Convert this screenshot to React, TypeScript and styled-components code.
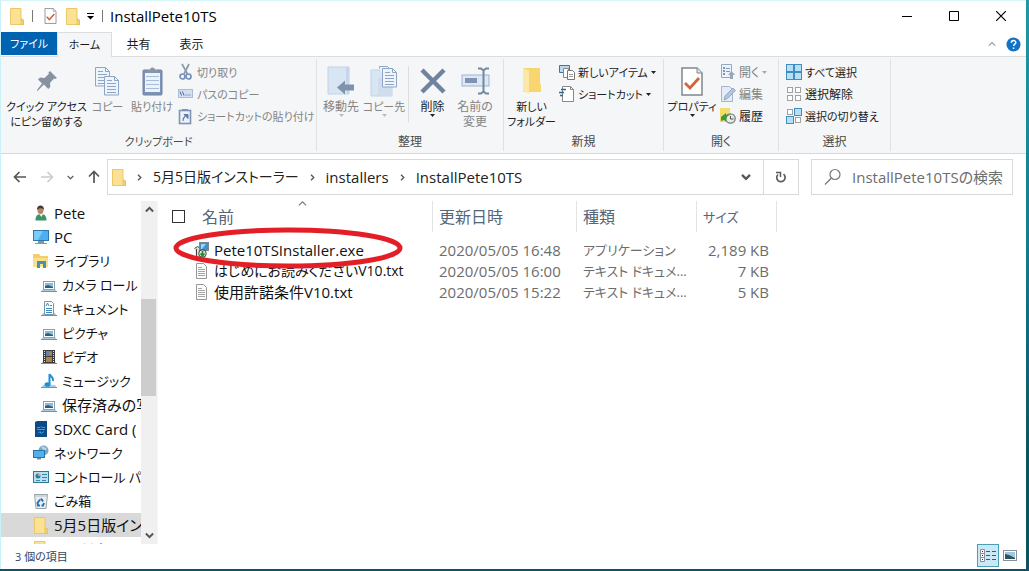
import React from "react";
import styled, { createGlobalStyle } from "styled-components";

const GlobalStyle = createGlobalStyle`
  *, *::before, *::after { box-sizing: border-box; }
  body {
    margin: 0;
    background: #0d5265;
    font-family: "Open Sans", "Noto Sans CJK JP", sans-serif;
    font-feature-settings: "palt";
    color: #1a1a1a;
  }
  button { font: inherit; font-feature-settings: inherit; color: inherit; background: none; border: 0; padding: 0; }
  svg { display: block; flex: none; }
`;

const Desktop = styled.div`
  height: 100vh;
  min-height: 480px;
  padding: 0 3px 2px 0;
  background: linear-gradient(#1d9aa3, #128092 40%, #0d5265 80%);
`;

const Window = styled.div`
  height: 100%;
  display: flex;
  flex-direction: column;
  background: #fff;
  border-top: 1px solid #d3f6f9;
  border-left: 1px solid #c9f1f8;
`;

const TitleBar = styled.header`
  display: flex;
  align-items: center;
  height: 31px;
  flex: none;
  padding: 0 2px 1px 9px;
`;

const QuickAccess = styled.div`
  display: flex;
  align-items: center;
`;

const QuickButton = styled.button<{ $gap: number }>`
  margin-right: ${(p) => p.$gap}px;
`;

const ThinRule = styled.span<{ $gap: number }>`
  width: 1px;
  height: 12px;
  margin-right: ${(p) => p.$gap}px;
  background: #777;
`;

const Title = styled.h1`
  flex: 1;
  margin: 0;
  font-size: 15px;
  font-weight: 400;
  line-height: 20px;
  color: #000;
`;

const CaptionButton = styled.button`
  width: 47px;
  height: 30px;
  display: grid;
  place-items: center;
`;

const TabBar = styled.nav`
  display: flex;
  height: 24px;
  flex: none;
  font-size: 12px;
  line-height: 22px;
`;

const FileTab = styled.button`
  width: 56px;
  height: 23px;
  font-size: 11px;
  color: #fff;
  background: #0063b1;
`;

const Tab = styled.button<{ $active?: boolean }>`
  width: ${(p) => (p.$active ? 55 : 53)}px;
  height: 25px;
  z-index: 1;
  font-size: ${(p) => (p.$active ? 11 : 12)}px;
  border: 1px solid ${(p) => (p.$active ? "#dcdddf" : "transparent")};
  border-bottom: 0;
  background: ${(p) => (p.$active ? "#f5f6f7" : "none")};
`;

const TabTools = styled.div`
  display: flex;
  align-items: center;
  gap: 10px;
  margin-left: auto;
  padding-right: 5px;
`;

const Ribbon = styled.section`
  display: flex;
  flex: none;
  height: 98px;
  background: #f5f6f7;
  border-top: 1px solid #dcdddf;
  border-bottom: 1px solid #d8d9db;
  font-size: 12px;
`;

const Group = styled.div<{ $width: number }>`
  display: flex;
  flex-direction: column;
  flex: none;
  width: ${(p) => p.$width}px;
  margin: 2px 0;
  padding-top: 2px;
  border-right: 1px solid #e0e1e3;
`;

const GroupBody = styled.div<{ $inset?: number }>`
  display: flex;
  flex: 1;
  padding-left: ${(p) => p.$inset ?? 0}px;
`;

const GroupLabel = styled.div<{ $kana?: boolean }>`
  height: 17px;
  font-size: ${(p) => (p.$kana ? 11 : 12)}px;
  line-height: 16px;
  text-align: center;
  color: #4a4a4a;
`;

const LargeButton = styled.button<{ $width: number; $muted?: boolean; $kana?: boolean }>`
  display: flex;
  flex-direction: column;
  flex: none;
  align-items: center;
  width: ${(p) => p.$width}px;
  padding-top: 2px;
  font-size: ${(p) => (p.$kana ? 11 : 12)}px;
  line-height: 15px;
  white-space: nowrap;
  color: ${(p) => (p.$muted ? "#848484" : "#222")};
`;

const LargeIcon = styled.span`
  display: grid;
  place-items: center;
  height: 36px;
`;

const ItemList = styled.div<{ $inset?: number }>`
  display: flex;
  flex-direction: column;
  padding-left: ${(p) => p.$inset ?? 0}px;
`;

const SmallButton = styled.button<{ $muted?: boolean; $kana?: boolean }>`
  display: flex;
  align-items: center;
  gap: 3px;
  height: 22px;
  font-size: ${(p) => (p.$kana ? 11 : 12)}px;
  white-space: nowrap;
  color: ${(p) => (p.$muted ? "#848484" : "#222")};
`;

const InnerRule = styled.span`
  width: 1px;
  height: 56px;
  margin: 5px 2px 0;
  background: #dddee0;
`;

const AddressRow = styled.div`
  display: flex;
  flex: none;
  height: 47px;
  padding: 5px 13px 6px 12px;
  gap: 12px;
`;

const NavButtons = styled.div`
  display: flex;
  align-items: center;
  width: 82px;
  gap: 13px;
`;

const AddressBox = styled.div`
  display: flex;
  align-items: center;
  flex: 1;
  border: 1px solid #d9d9d9;
  font-size: 15px;
`;

const Crumbs = styled.div`
  display: flex;
  align-items: center;
  flex: 1;
  gap: 10px;
  padding-left: 4px;
  line-height: 20px;
  white-space: nowrap;
  color: #222;
`;

const CrumbKana = styled.span`
  font-size: 14px;
`;

const BoxButton = styled.button<{ $ruled?: boolean }>`
  display: grid;
  place-items: center;
  align-self: stretch;
  width: 35px;
  border-left: 1px solid ${(p) => (p.$ruled ? "#d9d9d9" : "transparent")};
`;

const SearchBox = styled.label`
  display: flex;
  align-items: center;
  gap: 10px;
  width: 202px;
  padding-left: 12px;
  border: 1px solid #d9d9d9;
`;

const SearchInput = styled.input`
  flex: 1;
  min-width: 0;
  padding: 0;
  border: 0;
  outline: 0;
  background: none;
  font: inherit;
  font-size: 15px;
  font-feature-settings: inherit;
  &::placeholder { color: #6d6d6d; opacity: 1; }
`;

const Content = styled.div`
  display: flex;
  flex: 1;
  min-height: 0;
`;

const Sidebar = styled.aside`
  display: flex;
  flex: none;
  width: 157px;
  border-right: 1px solid #f6f6f6;
`;

const Tree = styled.ul`
  flex: 1;
  min-width: 0;
  margin: 0;
  padding: 0;
  overflow: hidden;
  list-style: none;
`;

const TreeItem = styled.li<{ $level: number; $selected?: boolean; $kana?: boolean }>`
  display: flex;
  align-items: center;
  gap: 5px;
  height: 24px;
  padding-left: ${(p) => (p.$level === 1 ? 32 : 40)}px;
  font-size: ${(p) => (p.$kana ? 13 : 15)}px;
  line-height: 24px;
  white-space: nowrap;
  color: #111;
  background: ${(p) => (p.$selected ? "#d9d9d9" : "none")};
`;

const IconSlot = styled.span`
  display: grid;
  place-items: center;
  flex: none;
  width: 16px;
`;

const ScrollTrack = styled.div`
  display: flex;
  flex-direction: column;
  width: 16px;
  background: #f0f0f0;
`;

const ScrollArrow = styled.button`
  display: grid;
  place-items: center;
  height: 17px;
`;

const ScrollSpace = styled.div<{ $grow: number }>`
  flex: ${(p) => p.$grow};
`;

const ScrollThumb = styled.div`
  flex: 97;
  margin-right: 1px;
  background: #cdcdcd;
`;

const Main = styled.main`
  position: relative;
  flex: 1;
  min-width: 0;
  overflow: hidden;
`;

const FileTable = styled.table`
  width: 100%;
  table-layout: fixed;
  border-collapse: separate;
  border-spacing: 0;
  font-size: 15px;
`;

const HeadCell = styled.th<{ $kana?: boolean }>`
  height: 31px;
  padding: 0 0 0 6px;
  text-align: left;
  font-size: ${(p) => (p.$kana ? 13 : 16)}px;
  font-weight: 400;
  line-height: 20px;
  color: #54657a;
  border-right: 1px solid #e3e3e3;
  &:last-child { border-right: 0; }
`;

const HeadName = styled.div`
  display: flex;
  align-items: center;
  gap: 17px;
  padding-left: 8px;
`;

const CheckBox = styled.input`
  appearance: none;
  width: 13px;
  height: 13px;
  margin: 0;
  border: 1px solid #333;
  background: #fff;
`;

const SortMark = styled.span`
  position: absolute;
  left: 140px;
  top: -2px;
`;

const Spacer = styled.tr`
  height: 7px;
`;

const Cell = styled.td<{ $right?: boolean; $kana?: boolean }>`
  height: 21px;
  padding: 0 ${(p) => (p.$right ? 8 : 0)}px 0 6px;
  font-size: ${(p) => (p.$kana ? 13 : 15)}px;
  line-height: 20px;
  vertical-align: middle;
  white-space: nowrap;
  overflow: hidden;
  text-align: ${(p) => (p.$right ? "right" : "left")};
  color: #6d6d6d;
`;

const FileName = styled.div<{ $kana?: boolean }>`
  display: flex;
  align-items: center;
  gap: 5px;
  padding-left: 30px;
  font-size: ${(p) => (p.$kana ? 14 : 15)}px;
  color: #111;
`;

const Marker = styled.svg`
  position: absolute;
  left: 14px;
  top: 25px;
  pointer-events: none;
`;

const StatusBar = styled.footer`
  display: flex;
  align-items: center;
  flex: none;
  height: 25px;
  padding: 0 9px 2px 14px;
  font-size: 11px;
  color: #33455f;
`;

const ViewButtons = styled.div`
  display: flex;
  align-items: center;
  gap: 4px;
  margin-left: auto;
`;

const ViewButton = styled.button<{ $active?: boolean }>`
  display: grid;
  place-items: center;
  width: ${(p) => (p.$active ? 22 : 14)}px;
  height: 23px;
  border: ${(p) => (p.$active ? "1px solid #4ba0b4" : "0")};
  background: ${(p) => (p.$active ? "#cbe8f6" : "none")};
`;

/* ---------- icons ---------- */

const Folder = ({ w = 14, h = 17 }: { w?: number; h?: number }) => (
  <svg width={w} height={h} viewBox="0 0 14 17">
    <path d="M.5.5h10.500v10l2.500 1.500v4.500H.5z" fill="#fbe193" stroke="#ecc765" />
    <path d="M11 11v5.500h2.500v-4.500z" fill="#f5d373" stroke="#e3ba50" strokeWidth=".7" />
  </svg>
);

const CheckSheet = ({ w, h }: { w: number; h: number }) => (
  <svg width={w} height={h} viewBox="0 0 22 29">
    <path d="M1 1h15l5 5v22H1z" fill="#fff" stroke="#7f868e" strokeWidth="1.500" />
    <path d="M16 1v5h5" fill="#dfe3e8" stroke="#7f868e" />
    <path d="M4 16l5 5 9-10" fill="none" stroke="#d5623a" strokeWidth="2.800" />
  </svg>
);

const Arrow = ({ color = "#222" }: { color?: string }) => (
  <svg width="5" height="3" viewBox="0 0 5 3"><path d="M0 0h5L2.500 3z" fill={color} /></svg>
);

const Chevron = ({ dir, w = 8, color = "#555", bold = 1.5 }: { dir: "up" | "down" | "right"; w?: number; color?: string; bold?: number }) => {
  const turn = { up: 180, down: 0, right: -90 }[dir];
  return (
    <svg width={w} height={w} viewBox="0 0 8 8">
      <path d="M.8 2.300L4 5.500 7.200 2.300" fill="none" stroke={color} strokeWidth={bold} transform={`rotate(${turn} 4 4)`} />
    </svg>
  );
};

const PinIcon = () => (
  <svg width="22" height="22" viewBox="0 0 22 22">
    <path d="M14 1l7 7-2 1-1-.5-4 4.500.3 4-2 2-4.500-4.500L1.500 21 .8 20.300 6 13.500 2 9.600l2-2 4.500.4 4.500-4.200-.7-1z" fill="#8793a0" />
  </svg>
);

const Page = ({ x, y, fill = "#eef4fb" }: { x: number; y: number; fill?: string }) => (
  <g transform={`translate(${x} ${y})`}>
    <path d="M.5.5h10l4 4v14.500H.5z" fill={fill} stroke="#8ea5c5" />
    <path d="M10.500.5v4h4M3 7.500h9M3 10.500h9M3 13.500h9M3 16.500h9M3 4.500h5" fill="none" stroke="#8ea5c5" />
  </g>
);

const CopyIcon = () => (
  <svg width="25" height="29" viewBox="0 0 25 29"><Page x={0} y={0} /><Page x={9} y={9} /></svg>
);

const PasteIcon = () => (
  <svg width="21" height="30" viewBox="0 0 21 30">
    <rect x="1" y="4" width="19" height="25" rx="1" fill="#7f92b2" stroke="#6e83a6" />
    <rect x="3" y="7" width="15" height="19" fill="#eaf2fb" />
    <path d="M4 10.500h13M4 14.500h13M4 18.500h13M4 22.500h13" stroke="#a9bdd7" />
    <path d="M5 7V4h3a2.500 2.500 0 0 1 5 0h3v3z" fill="#8a96a8" />
  </svg>
);

const ScissorsIcon = () => (
  <svg width="16" height="18" viewBox="0 0 16 18">
    <path d="M4 1l5.500 10M11 1L6 11" stroke="#8c9bb1" strokeWidth="1.700" />
    <circle cx="4.500" cy="13.500" r="2.500" fill="none" stroke="#7790b7" strokeWidth="1.700" />
    <circle cx="10.500" cy="13.500" r="2.500" fill="none" stroke="#7790b7" strokeWidth="1.700" />
  </svg>
);

const PathIcon = () => (
  <svg width="16" height="10" viewBox="0 0 16 10">
    <rect x=".5" y=".5" width="14" height="8" fill="#d2e0f0" stroke="#a9bdd7" />
    <path d="M2 2.500l1.500 4M4.500 2.500L6 6.500M7.500 6h1M9.500 6h1M11.500 6h1" stroke="#4e6c99" />
  </svg>
);

const ShortcutPasteIcon = () => (
  <svg width="16" height="17" viewBox="0 0 16 17">
    <rect x="1.500" y="2.500" width="11" height="13" fill="#eaf2fb" stroke="#7f94b5" strokeWidth="1.600" />
    <path d="M4 3h6V1H4z" fill="#7f94b5" />
    <path d="M5 13c0-3 .5-4 2.500-5M6 6.500h4v4z" fill="#5d7ba9" stroke="#5d7ba9" />
  </svg>
);

const MoveIcon = () => (
  <svg width="28" height="30" viewBox="0 0 28 30">
    <path d="M1 1h21v27H1z" fill="#d8e5f3" stroke="#c2d3e7" />
    <path d="M19 1h3v27h-2V18h-1z" fill="#c5d6ea" />
    <path d="M10 21.500l8-7v4h9v6h-9v4z" fill="#8093ad" />
  </svg>
);

const CopyToIcon = () => (
  <svg width="28" height="31" viewBox="0 0 28 31">
    <path d="M1 4h21v26H1z" fill="#d8e5f3" stroke="#c2d3e7" />
    <path d="M8 30V12h14v18z" fill="#cfddee" />
    <path d="M9.500 2.500V.5h8l3 3v14h-3" fill="#eef4fb" stroke="#8ea5c5" />
    <g transform="translate(3 2)"><Page x={9} y={0} /></g>
  </svg>
);

const DeleteIcon = () => (
  <svg width="26" height="26" viewBox="0 0 26 26">
    <path d="M2 2l22 22M24 2L2 24" stroke="#6f82a0" strokeWidth="4.500" />
  </svg>
);

const RenameIcon = () => (
  <svg width="29" height="28" viewBox="0 0 29 28">
    <rect x="1" y="8" width="27" height="11" fill="#dce8f5" stroke="#9db3cf" />
    <rect x="4" y="11" width="12" height="5" fill="#7e93b3" />
    <path d="M17 1.500h3l2.500 2 2.500-2h3M22.500 3v22M17 26.500h3l2.500-2 2.500 2h3" fill="none" stroke="#7487a3" strokeWidth="2" />
  </svg>
);

const NewFolderIcon = () => (
  <svg width="19" height="28" viewBox="0 0 19 28">
    <path d="M1 1h17v15l1 2v7H1z" fill="#f8d56f" />
    <path d="M1 1l6 3v23l-6-3z" fill="#fce9a8" />
  </svg>
);

const NewItemIcon = () => (
  <svg width="16" height="16" viewBox="0 0 16 16">
    <path d="M.5 1.500h10v7H.5z" fill="#bcd8ec" stroke="#44748f" />
    <path d="M4.500 4.500h5v9h-5z" fill="#fff" stroke="#888" />
    <path d="M8.500 6.500h5l2 2v7h-7z" fill="#fff" stroke="#777" />
    <path d="M10 10.500h4M10 12.500h4" stroke="#999" />
  </svg>
);

const NewShortcutIcon = () => (
  <svg width="16" height="16" viewBox="0 0 16 16">
    <path d="M3.500.5h8l3 3v12h-11z" fill="#fff" stroke="#888" />
    <path d="M11.500.5v3h3" fill="none" stroke="#888" />
    <path d="M2 3.500h5M0 6.500h5M1 9.500h3" stroke="#2c6c98" strokeWidth="1.400" />
  </svg>
);

const OpenIcon = () => (
  <svg width="16" height="16" viewBox="0 0 16 16">
    <path d="M1.500.5h10v13h-10z" fill="#edf3fa" stroke="#96a9c4" />
    <path d="M3 3h2v2H3zM3 6h2v2H3zM3 9h2v2H3zM6 4h4v1H6zM6 7h4v1H6z" fill="#8198ba" />
    <path d="M11.500 7l3.500 4h-2v4h-3v-4H8z" fill="#98a6bb" />
  </svg>
);

const EditIcon = () => (
  <svg width="16" height="16" viewBox="0 0 16 16">
    <path d="M1.500.5h8l3 3v12h-11z" fill="#e4edf7" stroke="#a3b6cf" />
    <path d="M4 14l1-4 8-8 2.500 2.500-8 8z" fill="#b4c6dd" stroke="#93a9c6" />
  </svg>
);

const HistoryIcon = () => (
  <svg width="16" height="16" viewBox="0 0 16 16">
    <path d="M0 0h10v14H0z" fill="#f4dc6c" />
    <circle cx="10.500" cy="10.500" r="4.700" fill="#e7eae8" stroke="#788178" strokeWidth="1.300" />
    <path d="M10.500 8v3h3" fill="none" stroke="#555" />
    <path d="M1 9l5-4v2c2-1 4-1 5 0-3 0-5 2-5 6.500L4 12 1 13z" fill="#3b9c3d" />
  </svg>
);

const GridIcon = ({ filled }: { filled: boolean[] }) => (
  <svg width="16" height="16" viewBox="0 0 16 16">
    {[[1, 1], [9, 1], [1, 9], [9, 9]].map(([x, y], i) => (
      <rect
        key={i}
        x={filled[i] ? x - 0.5 : x + 0.5}
        y={filled[i] ? y - 0.5 : y + 0.5}
        width={filled[i] ? 7 : 5}
        height={filled[i] ? 7 : 5}
        fill={filled[i] ? "#b9dff6" : "#fff"}
        stroke={filled[i] ? "#3f8fbe" : "#a2a2a2"}
      />
    ))}
  </svg>
);

const LineArrow = ({ dir, color }: { dir: "left" | "right" | "up"; color: string }) => {
  const turn = { left: 0, right: 180, up: 90 }[dir];
  return (
    <svg width="14" height="14" viewBox="0 0 14 14">
      <path d="M1.500 7H13M6.500 2L1.500 7l5 5" fill="none" stroke={color} strokeWidth="1.700" transform={`rotate(${turn} 7 7)`} />
    </svg>
  );
};

const RefreshIcon = () => (
  <svg width="12" height="13" viewBox="0 0 12 13">
    <path d="M8.500 3.200A4.200 4.200 0 1 1 3 3.500" fill="none" stroke="#5c5c5c" strokeWidth="1.700" />
    <path d="M1 1.500h4.500V6" fill="none" stroke="#5c5c5c" strokeWidth="1.500" />
  </svg>
);

const SearchIcon = () => (
  <svg width="18" height="18" viewBox="0 0 18 18">
    <circle cx="11" cy="6.500" r="5" fill="none" stroke="#777" strokeWidth="1.200" />
    <path d="M7.300 10.300L1 16.500" stroke="#777" strokeWidth="1.300" />
  </svg>
);

const UserIcon = () => (
  <svg width="16" height="16" viewBox="0 0 16 16">
    <path d="M2.500 15.500c0-5 2-6.500 5.500-6.500s5.500 2 5.500 6.500z" fill="#3f9268" />
    <path d="M6 9h4l-1.500 3z" fill="#e8f1ea" />
    <ellipse cx="7.500" cy="5" rx="3" ry="4" fill="#b78363" />
    <path d="M4 5c-.5-6 7.500-6 7 0-1-2-5-2.500-7 0z" fill="#463730" />
  </svg>
);

const MonitorIcon = () => (
  <svg width="16" height="16" viewBox="0 0 16 16">
    <rect x=".5" y="1.500" width="15" height="10" fill="#4db0ee" stroke="#2e78ad" />
    <path d="M1 2h9L5 11H1z" fill="#79cbf8" />
    <path d="M5 12h6v2H5zM2 14h12v1H2z" fill="#7f97a9" />
  </svg>
);

const LibraryIcon = () => (
  <svg width="16" height="16" viewBox="0 0 16 16">
    <path d="M0 1h6l1.500 2H15v11H0z" fill="#f3cf66" />
    <path d="M0 5h15v9H0z" fill="#fadf8d" />
    <path d="M4 15V8h9v7h-3v-4H7v4z" fill="#4691b5" />
  </svg>
);

const Tray = ({ children }: { children: React.ReactNode }) => (
  <svg width="16" height="16" viewBox="0 0 16 16">
    <path d="M2 12h12l2 3H0z" fill="#a5cfe5" />
    <path d="M0 14.500h16" stroke="#4b9fca" />
    {children}
  </svg>
);

const PictureIcon = () => (
  <Tray>
    <rect x="2.500" y="4.500" width="11" height="8" fill="#fff" stroke="#8c9dab" />
    <rect x="4" y="6" width="8" height="5" fill="#86bdda" />
    <path d="M4 9l3-1 5 2v1H4z" fill="#365b75" />
  </Tray>
);

const DocumentIcon = () => (
  <Tray>
    <path d="M3.500.5h7l2 2v11h-9z" fill="#fff" stroke="#7893a5" />
    <path d="M5 5l1.500-3L8 5M9 4.500h2M5 7.500h6M5 9.500h6M5 11.500h6" fill="none" stroke="#3d8bb7" />
  </Tray>
);

const VideoIcon = () => (
  <Tray>
    <rect x="2" y="1" width="12" height="13" fill="#3c3c40" />
    <path d="M5 2h6v5H5z" fill="#5c86ae" />
    <path d="M5 8h6v5H5zM8 3h3v3H8z" fill="#ac8447" />
    <path d="M3.500 2v11M12.500 2v11" stroke="#ddd" strokeDasharray="1 1" />
  </Tray>
);

const MusicIcon = () => (
  <Tray>
    <path d="M8.500 11.500V1c1 3 4.500 3 3.500 7" fill="none" stroke="#218fd6" strokeWidth="2" />
    <ellipse cx="6.500" cy="11.500" rx="3" ry="2.300" fill="#218fd6" />
  </Tray>
);

const CardIcon = () => (
  <svg width="16" height="16" viewBox="0 0 16 16">
    <path d="M2 1l2-1h10v16H2z" fill="#0b4a85" />
    <path d="M4 6.500h3l1-1 1 1h3M4 8.500h8M5 12.500l2-2 1 2 3-2" fill="none" stroke="#3aa4dc" />
  </svg>
);

const NetworkIcon = () => (
  <svg width="16" height="16" viewBox="0 0 16 16">
    <circle cx="10.500" cy="5.500" r="5" fill="#7ba9c4" />
    <path d="M8 2c2-1 4 0 6 2l-3 2z" fill="#b5d5e2" />
    <rect x=".5" y="5.500" width="11" height="7" fill="#4fb2ee" stroke="#2a75a8" />
    <path d="M4 13h4v1.500H4z" fill="#6f8ea5" />
  </svg>
);

const ControlPanelIcon = () => (
  <svg width="16" height="16" viewBox="0 0 16 16">
    <rect x=".5" y="2.500" width="15" height="11" fill="#b8e2f3" stroke="#2f7698" />
    <circle cx="5" cy="7" r="2.500" fill="#277ba7" />
    <path d="M5 7V4.500A2.500 2.500 0 0 1 7.500 7z" fill="#eea24c" />
    <path d="M9 5.500h5M9 8.500h5M3 11.500h4M9 11.500h4" stroke="#3a86a8" />
  </svg>
);

const RecycleIcon = () => (
  <svg width="16" height="16" viewBox="0 0 16 16">
    <path d="M1.500 1.500h13l-1.500 14H3z" fill="#e9eef1" stroke="#96a3ab" />
    <path d="M2 2h12v2H2z" fill="#cdd6db" />
    <path d="M8 5.500l2 3M11 10l-1 2.500H8.500M7 12.500H5L4.500 10 7 6.500" fill="none" stroke="#2b73b8" strokeWidth="2" />
  </svg>
);

const TextFileIcon = () => (
  <svg width="15" height="16" viewBox="0 0 15 16">
    <path d="M2.500.5h7l3 3v12h-10z" fill="#fdfdfd" stroke="#979797" />
    <path d="M4 4.500h4M4 6.500h7M4 8.500h7M4 10.500h7M4 12.500h7" stroke="#a5a5a5" />
  </svg>
);

const InstallerIcon = () => (
  <svg width="15" height="16" viewBox="0 0 15 16">
    <path d="M.5 6.500l3-2 3 2v9h-4M2.500 7v8.500" fill="#dcdcd4" stroke="#44443f" />
    <rect x="5.500" y=".5" width="9" height="8" fill="#3f8fce" stroke="#7a8692" />
    <path d="M7 2h5L8 7H7z" fill="#a4d3f2" />
    <circle cx="8.500" cy="11.500" r="3.800" fill="#dfe4df" stroke="#3d453f" />
    <path d="M8.500 8.500v5M6.500 11.500l2 2.500 2-2.500" fill="none" stroke="#238a35" strokeWidth="1.600" />
  </svg>
);

/* ---------- data ---------- */

const tree: { label: string; icon: React.ReactNode; level: number; kana?: boolean; selected?: boolean }[] = [
  { label: "Pete", icon: <UserIcon />, level: 1 },
  { label: "PC", icon: <MonitorIcon />, level: 1 },
  { label: "ライブラリ", icon: <LibraryIcon />, level: 1, kana: true },
  { label: "カメラ ロール", icon: <PictureIcon />, level: 2, kana: true },
  { label: "ドキュメント", icon: <DocumentIcon />, level: 2, kana: true },
  { label: "ピクチャ", icon: <PictureIcon />, level: 2, kana: true },
  { label: "ビデオ", icon: <VideoIcon />, level: 2, kana: true },
  { label: "ミュージック", icon: <MusicIcon />, level: 2, kana: true },
  { label: "保存済みの写真", icon: <PictureIcon />, level: 2 },
  { label: "SDXC Card (", icon: <CardIcon />, level: 1 },
  { label: "ネットワーク", icon: <NetworkIcon />, level: 1, kana: true },
  { label: "コントロール パネル", icon: <ControlPanelIcon />, level: 1, kana: true },
  { label: "ごみ箱", icon: <RecycleIcon />, level: 1, kana: true },
  { label: "5月5日版インストーラー", icon: <Folder />, level: 1, selected: true },
  { label: "システム", icon: <Folder />, level: 1 },
];

const files = [
  { name: "Pete10TSInstaller.exe", kana: false, date: "2020/05/05 16:48", type: "アプリケーション", size: "2,189 KB", icon: <InstallerIcon /> },
  { name: "はじめにお読みくださいV10.txt", kana: true, date: "2020/05/05 16:00", type: "テキスト ドキュメ...", size: "7 KB", icon: <TextFileIcon /> },
  { name: "使用許諾条件V10.txt", kana: false, date: "2020/05/05 15:22", type: "テキスト ドキュメ...", size: "5 KB", icon: <TextFileIcon /> },
];

export default function App() {
  return (
    <Desktop>
      <GlobalStyle />
      <Window>
        <TitleBar>
          <QuickAccess>
            <QuickButton $gap={8} aria-label="フォルダー"><Folder /></QuickButton>
            <ThinRule $gap={11} />
            <QuickButton $gap={9} aria-label="プロパティ"><CheckSheet w={13} h={16} /></QuickButton>
            <QuickButton $gap={7} aria-label="新しいフォルダー"><Folder /></QuickButton>
            <QuickButton $gap={7} aria-label="カスタマイズ">
              <svg width="8" height="8" viewBox="0 0 8 8"><path d="M0 1.500h7" stroke="#000" /><path d="M0 4h7L3.500 7.500z" fill="#000" /></svg>
            </QuickButton>
            <ThinRule $gap={7} />
          </QuickAccess>
          <Title>InstallPete10TS</Title>
          <CaptionButton aria-label="最小化"><svg width="10" height="10"><path d="M0 5.500h10" stroke="#000" /></svg></CaptionButton>
          <CaptionButton aria-label="最大化"><svg width="10" height="10"><path d="M.5.5h9v9h-9z" fill="none" stroke="#000" /></svg></CaptionButton>
          <CaptionButton aria-label="閉じる"><svg width="10" height="10"><path d="M0 0l10 10M10 0L0 10" stroke="#000" strokeWidth="1.200" /></svg></CaptionButton>
        </TitleBar>

        <TabBar>
          <FileTab>ファイル</FileTab>
          <Tab $active>ホーム</Tab>
          <Tab>共有</Tab>
          <Tab>表示</Tab>
          <TabTools>
            <Chevron dir="up" color="#999" bold={1.1} />
            <svg width="15" height="15" viewBox="0 0 15 15">
              <circle cx="7.500" cy="7.500" r="7" fill="#1272c4" />
              <path d="M5.300 5.800c0-3 4.500-3 4.500-.3 0 1.700-2.200 1.700-2.200 3.500M7.600 10.500v1.500" fill="none" stroke="#fff" strokeWidth="1.500" />
            </svg>
          </TabTools>
        </TabBar>

        <Ribbon>
          <Group $width={316}>
            <GroupBody $inset={3}>
              <LargeButton $width={85} $kana><LargeIcon><PinIcon /></LargeIcon>クイック アクセス<br />にピン留めする</LargeButton>
              <LargeButton $width={37} $muted $kana><LargeIcon><CopyIcon /></LargeIcon>コピー</LargeButton>
              <LargeButton $width={52} $muted $kana><LargeIcon><PasteIcon /></LargeIcon>貼り付け</LargeButton>
              <ItemList>
                <SmallButton $muted $kana><ScissorsIcon />切り取り</SmallButton>
                <SmallButton $muted $kana><PathIcon />パスのコピー</SmallButton>
                <SmallButton $muted $kana><ShortcutPasteIcon />ショートカットの貼り付け</SmallButton>
              </ItemList>
            </GroupBody>
            <GroupLabel $kana>クリップボード</GroupLabel>
          </Group>

          <Group $width={187}>
            <GroupBody $inset={3}>
              <LargeButton $width={42} $muted><LargeIcon><MoveIcon /></LargeIcon>移動先<Arrow color="#bbb" /></LargeButton>
              <LargeButton $width={44} $muted $kana><LargeIcon><CopyToIcon /></LargeIcon>コピー先<Arrow color="#bbb" /></LargeButton>
              <InnerRule />
              <LargeButton $width={43}><LargeIcon><DeleteIcon /></LargeIcon>削除<Arrow /></LargeButton>
              <LargeButton $width={42} $muted><LargeIcon><RenameIcon /></LargeIcon>名前の<br />変更</LargeButton>
            </GroupBody>
            <GroupLabel>整理</GroupLabel>
          </Group>

          <Group $width={160}>
            <GroupBody $inset={3}>
              <LargeButton $width={49} $kana><LargeIcon><NewFolderIcon /></LargeIcon>新しい<br />フォルダー</LargeButton>
              <ItemList $inset={3}>
                <SmallButton $kana><NewItemIcon />新しいアイテム<Arrow /></SmallButton>
                <SmallButton $kana><NewShortcutIcon />ショートカット<Arrow /></SmallButton>
              </ItemList>
            </GroupBody>
            <GroupLabel>新規</GroupLabel>
          </Group>

          <Group $width={115}>
            <GroupBody $inset={3}>
              <LargeButton $width={50} $kana><LargeIcon><CheckSheet w={22} h={29} /></LargeIcon>プロパティ<Arrow /></LargeButton>
              <ItemList $inset={3}>
                <SmallButton $muted><OpenIcon />開く<Arrow color="#aaa" /></SmallButton>
                <SmallButton $muted><EditIcon />編集</SmallButton>
                <SmallButton><HistoryIcon />履歴</SmallButton>
              </ItemList>
            </GroupBody>
            <GroupLabel>開く</GroupLabel>
          </Group>

          <Group $width={112}>
            <GroupBody>
              <ItemList $inset={7}>
                <SmallButton $kana><GridIcon filled={[true, true, true, true]} />すべて選択</SmallButton>
                <SmallButton><GridIcon filled={[false, false, false, false]} />選択解除</SmallButton>
                <SmallButton $kana><GridIcon filled={[false, true, true, false]} />選択の切り替え</SmallButton>
              </ItemList>
            </GroupBody>
            <GroupLabel>選択</GroupLabel>
          </Group>
        </Ribbon>

        <AddressRow>
          <NavButtons>
            <button aria-label="戻る"><LineArrow dir="left" color="#555" /></button>
            <button aria-label="進む"><LineArrow dir="right" color="#ccc" /></button>
            <button aria-label="履歴"><Chevron dir="down" w={7} color="#666" /></button>
            <button aria-label="上へ"><LineArrow dir="up" color="#555" /></button>
          </NavButtons>
          <AddressBox>
            <Crumbs>
              <Folder />
              <Chevron dir="right" w={7} />
              <CrumbKana>5月5日版インストーラー</CrumbKana>
              <Chevron dir="right" w={7} />
              <span>installers</span>
              <Chevron dir="right" w={7} />
              <span>InstallPete10TS</span>
            </Crumbs>
            <BoxButton aria-label="以前の場所"><Chevron dir="down" w={10} bold={1.8} /></BoxButton>
            <BoxButton $ruled aria-label="最新の情報に更新"><RefreshIcon /></BoxButton>
          </AddressBox>
          <SearchBox>
            <SearchIcon />
            <SearchInput placeholder="InstallPete10TSの検索" aria-label="検索" />
          </SearchBox>
        </AddressRow>

        <Content>
          <Sidebar>
            <Tree>
              {tree.map((t) => (
                <TreeItem key={t.label} $level={t.level} $kana={t.kana} $selected={t.selected}>
                  <IconSlot>{t.icon}</IconSlot>
                  <span>{t.label}</span>
                </TreeItem>
              ))}
            </Tree>
            <ScrollTrack>
              <ScrollArrow aria-label="上へスクロール"><Chevron dir="up" w={9} bold={1.8} /></ScrollArrow>
              <ScrollSpace $grow={81} />
              <ScrollThumb />
              <ScrollSpace $grow={131} />
              <ScrollArrow aria-label="下へスクロール"><Chevron dir="down" w={9} bold={1.8} /></ScrollArrow>
            </ScrollTrack>
          </Sidebar>

          <Main>
            <FileTable>
              <colgroup>
                <col style={{ width: 275 }} />
                <col style={{ width: 144 }} />
                <col style={{ width: 120 }} />
                <col style={{ width: 80 }} />
                <col />
              </colgroup>
              <thead>
                <tr>
                  <HeadCell>
                    <HeadName>
                      <CheckBox type="checkbox" aria-label="すべて選択" />
                      名前
                    </HeadName>
                  </HeadCell>
                  <HeadCell>更新日時</HeadCell>
                  <HeadCell>種類</HeadCell>
                  <HeadCell $kana>サイズ</HeadCell>
                  <HeadCell aria-hidden="true" />
                </tr>
              </thead>
              <tbody>
                <Spacer aria-hidden="true"><td colSpan={5} /></Spacer>
                {files.map((f) => (
                  <tr key={f.name}>
                    <Cell><FileName $kana={f.kana}>{f.icon}<span>{f.name}</span></FileName></Cell>
                    <Cell>{f.date}</Cell>
                    <Cell $kana>{f.type}</Cell>
                    <Cell $right>{f.size}</Cell>
                    <Cell />
                  </tr>
                ))}
              </tbody>
            </FileTable>
            <SortMark><Chevron dir="up" w={9} color="#777" bold={1} /></SortMark>
            <Marker width="232" height="44" viewBox="0 0 232 44">
              <ellipse cx="116" cy="22" rx="112" ry="18" fill="none" stroke="#e31e26" strokeWidth="5" />
            </Marker>
          </Main>
        </Content>

        <StatusBar>
          3 個の項目
          <ViewButtons>
            <ViewButton $active aria-label="詳細">
              <svg width="18" height="15" viewBox="0 0 18 15">
                <path d="M1.500 1.500h4v4h-4zM1.500 5.500h4v4h-4zM1.500 9.500h4v4h-4z" fill="#fff" stroke="#8a8f9a" />
                <path d="M3 3h1v1H3zM3 7h1v1H3zM3 11h1v1H3z" fill="#333" />
                <path d="M7 3.500h4M13 3.500h4M7 7.500h4M13 7.500h4M7 11.500h4M13 11.500h4" stroke="#555" />
              </svg>
            </ViewButton>
            <ViewButton aria-label="大アイコン">
              <svg width="14" height="11" viewBox="0 0 14 11">
                <rect x=".5" y=".5" width="13" height="10" fill="#fff" stroke="#8a8f9a" />
                <path d="M2 2h10v7H2z" fill="#9cc8e2" />
                <path d="M2 4l4 1 6 3v1H2z" fill="#2f5260" />
              </svg>
            </ViewButton>
          </ViewButtons>
        </StatusBar>
      </Window>
    </Desktop>
  );
}
